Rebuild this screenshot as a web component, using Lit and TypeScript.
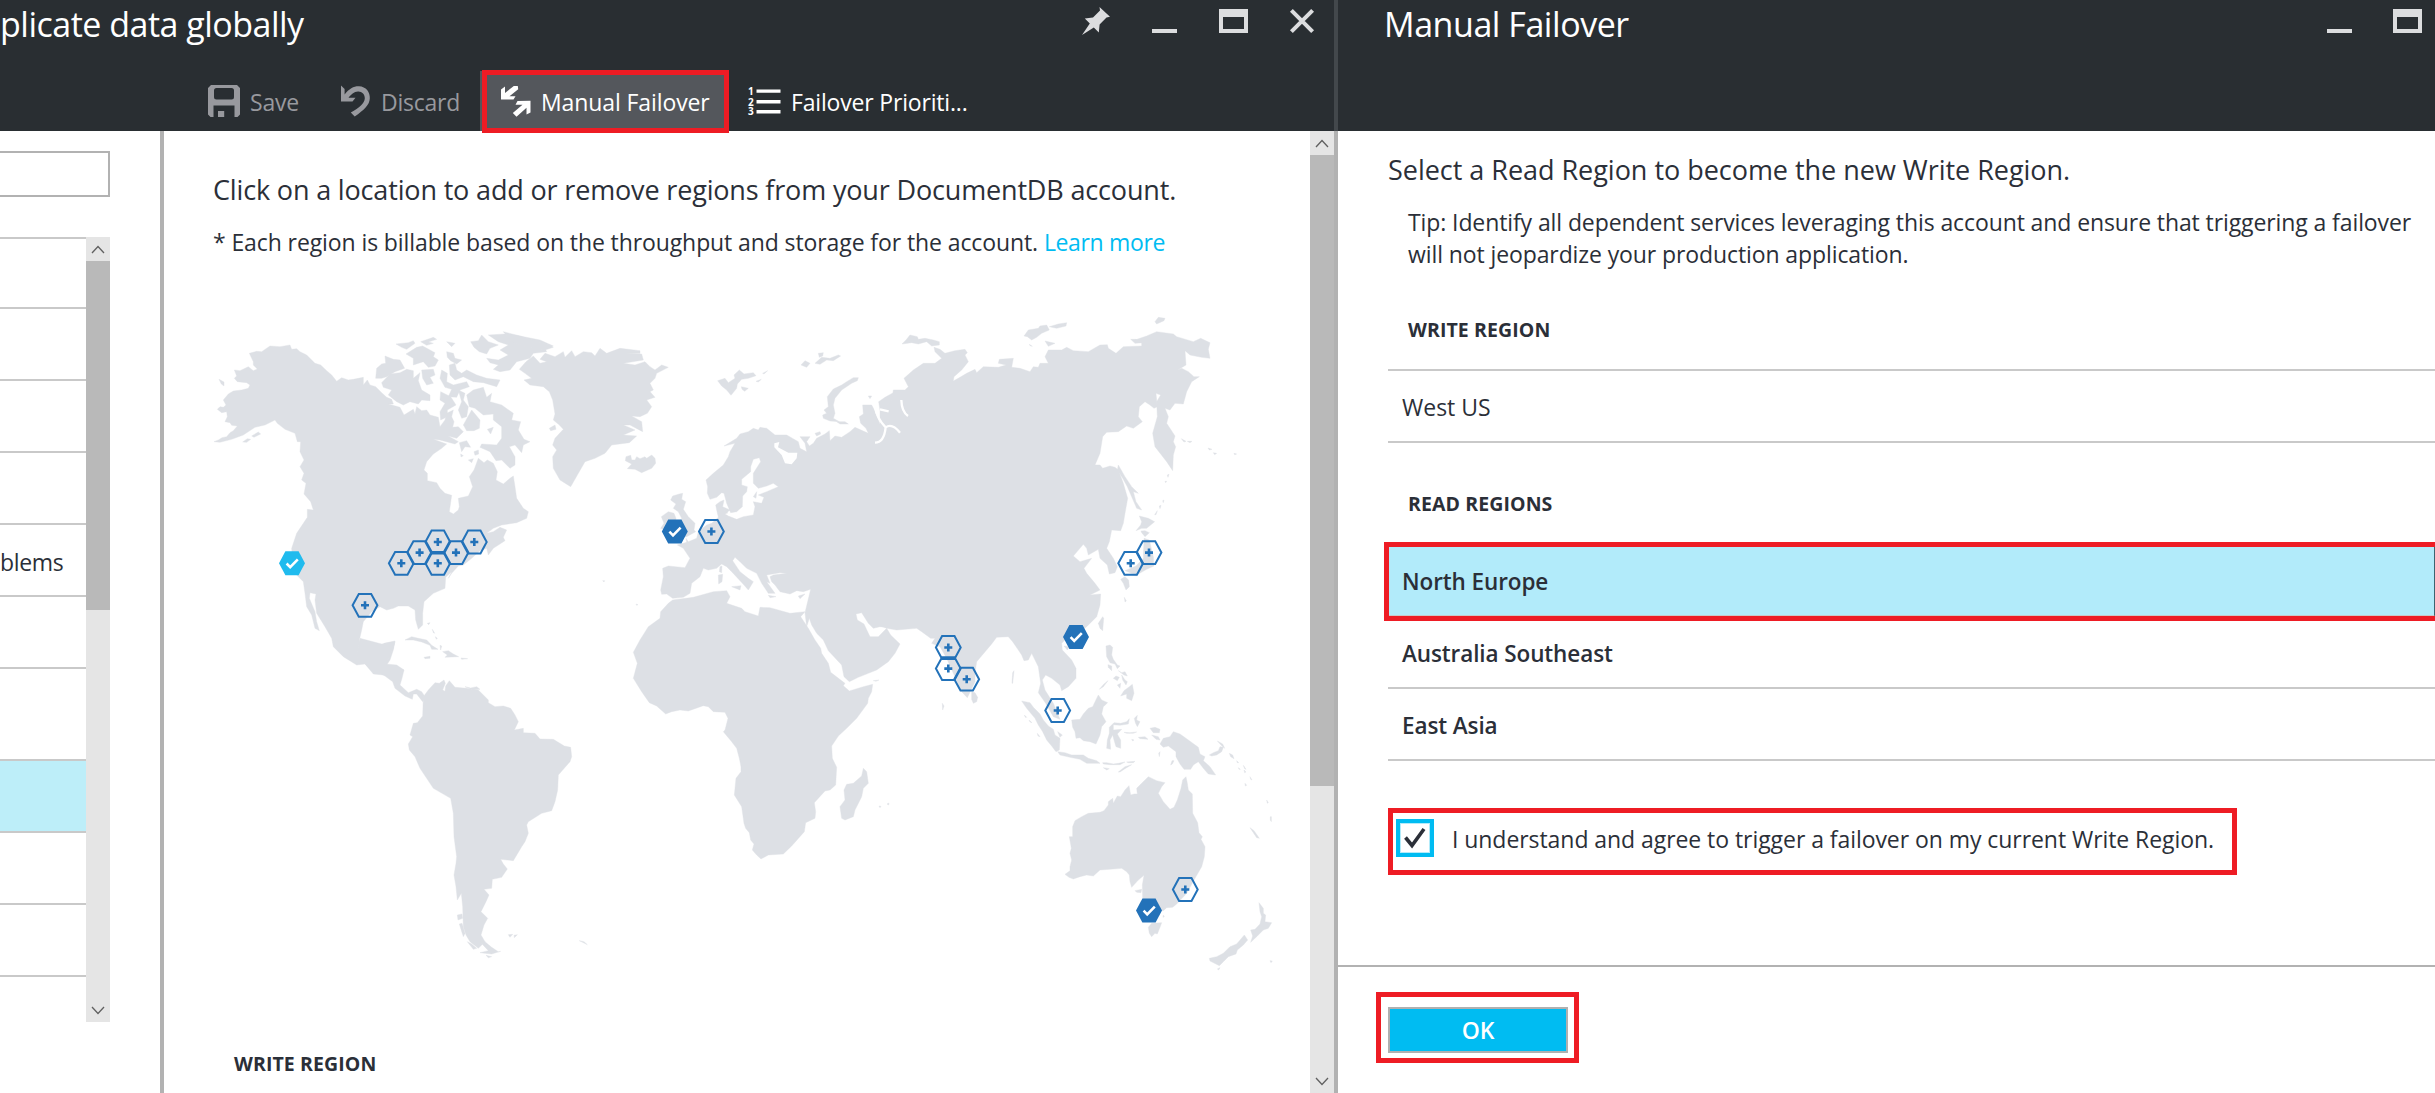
import { LitElement, html, css, svg, nothing } from "lit";
import { customElement } from "lit/decorators.js";
import { classMap } from "lit/directives/class-map.js";

type Marker = { x: number; y: number; kind: "plus" | "check" | "write" };

const MARKERS: Marker[] = [
  { x: 292, y: 563.3, kind: "write" },
  { x: 401.3, y: 563.3, kind: "plus" },
  { x: 419.6, y: 552.6, kind: "plus" },
  { x: 437.8, y: 542, kind: "plus" },
  { x: 437.8, y: 563.3, kind: "plus" },
  { x: 456, y: 552.6, kind: "plus" },
  { x: 474.3, y: 542, kind: "plus" },
  { x: 365, y: 605.3, kind: "plus" },
  { x: 674.8, y: 531.5, kind: "check" },
  { x: 711.4, y: 531.5, kind: "plus" },
  { x: 1130.7, y: 563.3, kind: "plus" },
  { x: 1149, y: 552.6, kind: "plus" },
  { x: 1076, y: 637, kind: "check" },
  { x: 948.3, y: 647.5, kind: "plus" },
  { x: 948.3, y: 668.6, kind: "plus" },
  { x: 966.7, y: 679.2, kind: "plus" },
  { x: 1057.7, y: 710.5, kind: "plus" },
  { x: 1185.3, y: 889.5, kind: "plus" },
  { x: 1149, y: 910.5, kind: "check" },
];

/* Land outlines, grouped by map sheet. Each sheet is drawn at three units per map pixel. */
const NORTH_AMERICA = [
  "42,395 55,390 66,383 80,380 90,368 100,362 112,348 95,346 90,338 75,335 82,320 80,305 65,308 52,298 60,290 70,292 78,285 70,270 85,252 100,243 125,240 145,235 150,225 140,218 112,215 103,205 110,198 103,180 120,182 145,170 160,182 172,177 160,165 160,155 148,130 170,124 185,125 210,108 240,110 270,105 275,118 290,116 300,125 320,135 345,160 362,165 380,182 395,195 410,214 425,203 445,210 460,208 490,202 490,225 502,210 510,225 527,230 545,248 560,262 575,268 580,282 565,282 600,292 612,315 640,298 645,312 650,290 665,302 680,300 690,315 715,322 720,350 735,330 740,310 760,300 755,320 762,335 758,352 775,350 790,365 770,385 745,378 775,395 765,402 720,390 700,388 740,402 725,415 700,432 680,455 672,480 682,490 682,512 710,518 720,535 735,550 755,556 748,605 760,612 775,600 778,590 775,565 805,558 818,530 808,500 822,480 835,445 852,458 862,450 880,460 892,485 888,510 910,522 930,505 940,498 945,530 950,565 970,595 985,605 980,625 950,638 905,645 880,655 860,670 880,665 900,652 920,660 910,682 915,692 880,715 865,735 860,715 840,722 815,745 790,765 775,768 755,790 745,805 755,785 737,802 735,835 700,850 672,875 668,910 668,945 655,958 647,930 645,900 625,888 595,888 580,895 560,900 540,890 515,905 490,935 485,960 478,990 490,1020 515,1035 540,1025 552,1000 585,993 580,1020 570,1050 560,1065 590,1070 612,1080 600,1100 520,1092 495,1062 470,1065 430,1040 400,1010 395,985 375,950 350,910 345,870 348,852 330,848 328,865 345,905 350,935 358,962 345,955 335,915 320,890 315,850 310,815 290,795 278,760 275,715 290,670 310,640 322,622 322,598 340,600 332,575 312,552 318,520 305,510 312,490 300,470 312,450 300,425 302,395 292,395 285,370 255,358 232,340 225,330 195,345 165,352 130,375 95,388 60,397",
  "57,208 72,216 72,228 64,222",
  "128,396 142,386 152,388 140,397",
  "155,378 175,366 182,372 162,382",
  "527,205 530,175 545,162 557,160 555,138 580,148 600,150 614,175 585,185 560,200 545,205",
  "545,218 570,192 600,188 620,178 640,182 640,205 660,188 655,212 665,240 690,255 690,272 665,270 655,282 630,275 610,285 590,275 565,255 575,240 550,232",
  "588,102 625,98 640,92 645,100 620,118 605,112",
  "618,132 650,112 668,108 690,120 705,128 700,140 715,150 705,168 685,172 670,155 640,165 640,145",
  "662,95 700,82 710,88 685,96 700,100 680,106",
  "740,125 760,130 765,145 785,150 770,162 752,152 742,142",
  "740,95 765,100 755,110",
  "748,165 765,160 770,180 785,190 800,180 830,195 860,205 900,210 890,230 850,218 820,215 790,200 765,210 750,195",
  "665,180 700,178 705,195 690,202 700,220 680,225 668,205",
  "725,180 742,190 740,215 760,225 800,215 808,230 780,240 770,262 745,260 755,238 735,232 720,205",
  "812,95 835,92 845,75 865,95 895,105 870,115 860,132 838,125 822,112",
  "865,75 915,72 960,78 1020,90 1060,108 1035,115 1040,125 1000,130 990,145 950,155 930,180 900,185 880,178 895,165 870,158 860,145 895,150 925,135 900,120 925,105 895,95",
  "722,245 752,260 768,285 742,300 742,320 722,330 720,305 735,280 720,270",
  "775,240 795,250 790,270 805,290 800,320 785,325 775,300 785,275",
  "800,255 820,240 850,232 860,262 875,250 870,275 905,285 940,310 935,330 962,335 955,360 972,388 990,395 970,405 965,428 945,405 928,410 945,440 945,465 930,475 905,450 888,452 870,425 840,412 845,402 890,405 905,385 905,350 880,330 880,312 850,315 825,295 808,290",
  "815,300 840,330 838,355 822,362 800,362 790,345",
  "862,358 880,352 872,372",
  "778,398 800,392 812,412 795,410 785,425",
  "822,425 835,420 836,432 825,436",
  "805,450 820,446 815,458",
  "782,432 790,437 783,441",
  "615,990 635,980 655,985 680,990 695,1006 714,1018 695,1018 690,1006 665,996 640,990",
  "728,1025 745,1022 760,1032 776,1040 735,1042 742,1035",
  "672,1042 690,1039 690,1045 675,1046",
  "783,1044 803,1046 785,1048",
  "682,940 690,938 686,944",
  "697,958 704,970 700,968",
  "706,980 712,985 709,988",
];

const EUROPE = [
  "-110,65 -60,78 -10,95 30,105 40,112 15,120 -30,112 -80,100",
  "-62,178 -42,155 -20,138 0,160 20,155 0,148 15,130 45,140 70,125 75,142 95,122 105,140 130,125 155,128 165,138 180,115 200,130 240,115 300,122 300,130 260,130 305,132 310,150 250,160 285,165 315,155 330,170 345,180 365,165 385,172 350,190 345,205 330,220 340,240 330,245 345,262 320,270 335,290 322,310 300,320 275,318 305,335 308,365 270,345 250,345 285,360 250,375 290,378 268,398 215,405 195,430 165,445 135,455 115,490 92,530 60,510 40,475 38,440 50,420 38,405 45,385 70,358 58,345 40,330 45,312 38,270 28,245 10,230 -30,225 -48,210 -25,205 -45,190",
  "28,355 45,345 48,358 32,362",
  "258,440 272,436 275,450 285,450 290,440 300,446 315,440 320,445 335,435 345,445 347,460 335,475 305,488 285,478 262,476 275,462 256,452",
  "533,212 555,205 565,218 585,205 582,195 598,180 612,192 640,188 648,197 625,205 605,208 592,222 590,235 573,256 560,240 545,228",
  "604,230 625,235 614,244 606,238",
  "648,214 664,208 655,216",
  "668,190 683,182 672,192",
  "955,203 952,212 935,220 905,240 885,265 880,285 885,310 880,325 898,335 870,333 850,325 848,315 860,310 852,300 865,290 862,260 880,237 905,225 920,215 940,203",
  "783,165 795,152 810,160 800,172",
  "825,160 845,142 870,145 895,135 902,138 880,152 860,150 840,163",
  "835,130 850,128 848,138 838,142",
  "392,570 398,558 418,552 428,550 425,568 437,575 430,598 445,620 465,640 462,660 467,665 440,680 412,680 425,660 420,640 425,625 415,605 400,595 408,582",
  "364,620 385,605 402,610 408,625 405,650 390,665 362,655 372,640",
  "368,775 385,768 435,773 450,745 430,715 412,705 440,697 438,685 445,695 470,685 475,665 500,645 515,640 535,622 530,600 527,585 540,575 552,570 548,590 570,600 555,612 565,618 590,628 610,620 640,615 645,590 640,575 665,580 672,562 655,555 680,545 715,530 700,520 680,528 655,535 640,520 640,490 662,455 658,443 640,448 632,470 632,485 605,508 605,525 622,530 620,545 608,558 607,590 590,605 572,608 560,580 552,550 545,548 530,562 510,568 502,550 503,530 498,510 520,490 550,465 565,440 570,425 585,400 552,408 590,385 600,372 625,365 640,355 655,360 660,352 680,355 705,375 740,375 775,395 780,415 800,425 795,400 780,380 810,380 800,395 808,408 820,400 830,385 855,372 868,362 870,392 885,378 905,382 930,365 945,352 985,370 978,355 962,340 958,320 970,312 968,285 995,285 1003,300 1015,330 1025,355 1045,375 1045,952 1020,950 1000,955 985,940 965,908 948,912 952,930 972,942 990,980 1015,980 1040,955 1052,975 1080,1002 1065,1030 1045,1055 1010,1080 985,1090 955,1102 928,1115 912,1100 905,1065 865,1022 850,990 830,970 815,945 808,925 800,950 795,908 812,838 790,845 770,842 750,852 720,845 705,825 695,815 690,800 700,795 740,790 720,788 680,795 690,820 680,815 705,850 685,850 665,820 650,790 620,775 600,755 585,742 578,752 600,785 625,805 640,815 625,840 612,825 575,785 560,770 545,762 530,775 505,780 490,775 480,800 455,820 450,850 430,862 398,865 380,852 365,853 362,840 370,800",
  "575,830 603,827 600,840",
  "535,795 548,793 546,815 536,822",
  "540,770 546,768 545,788 538,785",
  "775,858 795,852 780,866",
  "685,856 708,860 690,863",
  "552,600 562,598 562,610 555,610",
  "650,545 640,560 648,565",
  "825,370 840,365 842,372 830,378",
  "890,335 915,335 925,342 900,342",
  "985,258 995,258 990,266",
  "1016,275 1035,262 1060,248 1095,250 1110,270 1090,300 1108,320 1060,318 1045,300 1020,300",
  "188,812 194,812 192,816",
  "288,882 294,884 290,886",
];

const ASIA = [
  "0,300 15,288 35,275 40,240 75,240 85,230 72,205 100,180 130,160 165,160 185,145 165,125 162,112 180,118 195,130 225,122 255,118 262,128 255,135 265,155 245,180 222,200 220,213 240,202 260,190 285,178 290,188 310,170 355,172 378,165 355,160 358,148 400,145 395,172 420,175 450,185 460,170 475,172 480,160 505,160 495,140 505,120 545,120 560,112 580,122 625,125 660,105 682,104 685,115 708,130 730,110 785,108 785,98 765,90 800,78 830,65 880,72 890,80 940,95 962,85 990,98 985,118 990,145 965,142 945,138 930,135 915,122 918,165 893,180 905,175 925,185 942,200 958,200 935,215 920,245 910,282 885,280 870,300 855,295 865,320 860,340 885,378 880,395 887,410 880,435 878,482 860,455 825,410 818,370 832,320 830,275 842,255 828,250 832,290 822,295 810,285 795,275 778,290 775,320 787,335 760,355 740,348 715,365 680,367 668,380 660,430 645,465 660,465 668,475 690,468 705,472 715,480 730,520 743,565 735,610 730,640 722,662 695,660 688,695 680,715 700,745 712,770 705,788 688,792 682,765 660,745 655,718 625,735 620,715 610,703 580,738 600,755 635,745 612,775 620,790 645,820 660,840 630,855 662,852 660,885 650,920 620,950 600,965 570,975 545,1000 547,1020 575,1050 588,1075 588,1105 565,1130 545,1142 540,1125 515,1105 497,1095 487,1110 495,1140 520,1180 540,1228 520,1220 497,1180 475,1148 482,1120 475,1070 455,1030 445,1050 432,1052 425,1035 398,995 385,980 350,982 335,1002 290,1055 285,1090 285,1115 262,1163 245,1145 220,1090 200,1045 180,1010 155,1000 165,985 152,985 125,965 110,955 50,960 20,955 0,948",
  "715,465 735,500 755,530 775,550 760,545 768,575 785,600 770,595 755,560 742,530 728,505 712,480",
  "778,618 805,625 824,635 800,655 785,655 768,662 782,645 785,635",
  "783,663 795,662 808,668 795,680 785,668",
  "792,685 808,690 820,740 822,768 800,778 775,792 755,790 735,782 768,768 790,745",
  "755,795 775,788 770,798",
  "722,808 735,800 746,810 748,830 738,840 730,820",
  "655,940 668,920 671,925 668,962 660,955",
  "552,1008 568,1010 562,1020",
  "66,102 78,90 90,75 112,80 115,88 135,85 160,90 178,95 178,105 155,108 140,95 115,102 95,98",
  "432,78 445,60 475,55 480,48 500,45 508,60 485,70 470,82 455,90 442,80",
  "508,50 535,42 560,38 558,48 530,55",
  "495,93 525,100 505,109",
  "448,103 457,109 450,107",
  "825,35 835,22 855,25 852,32 830,42",
  "752,88 768,88 790,98 765,100",
  "904,386 918,394 912,396",
  "922,394 936,394 930,398",
  "984,414 996,418 988,420",
  "1000,428 1010,430 1004,434",
  "1062,430 1070,432 1064,434",
  "862,495 867,493 864,502",
  "855,514 860,514 857,518",
  "848,572 852,570 850,578",
  "838,588 843,586 840,596",
  "824,614 832,602 828,614",
  "733,862 739,873 735,876",
];

const SOUTH = [
  "-60,-5 5,12 45,5 40,25 18,72 50,75 72,90 66,115 60,135 85,158 110,148 125,155 135,170 128,185 110,162 100,162 97,178 75,168 45,145 38,125 15,108 0,100 -30,85 -70,50",
  "130,170 145,150 165,128 178,130 192,120 196,130 188,150 195,154 197,138 208,122 225,142 260,145 275,148 295,150 325,180 325,188 345,200 370,198 392,205 405,225 415,245 403,270 430,265 430,278 465,280 480,297 520,298 553,318 572,322 575,350 570,365 535,405 533,450 525,485 515,512 485,520 445,545 440,555 445,580 435,605 425,620 400,662 362,658 370,672 382,687 365,712 337,718 335,745 312,748 327,765 318,785 303,815 323,835 312,855 303,885 315,905 295,925 270,905 258,885 250,860 248,800 244,760 232,780 228,740 222,705 228,670 230,650 222,590 220,520 212,475 160,445 140,415 120,385 105,350 88,330 85,312 98,290 90,285 100,250 112,248 128,228",
  "232,825 246,822 248,835 234,840",
  "238,852 246,850 255,880 250,890",
  "262,905 275,912 290,925 280,928",
  "300,905 315,905 335,922 355,935 362,934 335,942 300,938 325,932",
  "318,946 335,950 325,953",
  "385,884 398,883 390,892",
  "402,886 412,884 403,893",
  "598,902 612,905 622,914 612,909",
  "182,30 185,18 180,16",
  "255,140 272,144 290,140 300,148 278,150",
  "878,-120 865,-110 842,-85 840,-65 805,-40 780,0 760,37 772,70 760,115 785,155 808,188 830,198 857,222 875,215 900,210 925,213 970,197 985,200 1000,215 1035,217 1044,235 1035,270 1030,275 1055,305 1070,325 1078,355 1083,380 1083,395 1068,415 1063,465 1085,500 1092,550 1097,565 1108,578 1112,600 1122,612 1117,630 1130,645 1143,657 1165,645 1210,642 1235,618 1273,575 1277,548 1305,535 1307,515 1303,488 1335,453 1350,450 1367,435 1370,382 1357,355 1355,318 1375,288 1400,265 1430,235 1463,190 1465,175 1475,155 1478,133 1450,140 1408,153 1390,137 1395,130 1352,97 1345,70 1325,40 1322,25 1305,0 1285,-35 1262,-70 1275,-85 1230,-80 1170,-97 1140,-98 1135,-72 1095,-85 1085,-95 1040,-110 1050,-130 1040,-148 1000,-145 940,-128",
  "1450,385 1460,395 1465,430 1450,445 1445,470 1425,510 1420,530 1395,540 1385,535 1380,500 1395,480 1392,450 1400,433 1420,430 1445,408",
  "1480,122 1497,120 1488,124",
  "1497,498 1503,499 1500,503",
  "1521,492 1527,489 1526,495",
];

const OCEANIA = [
  "275,155 285,158 293,172 290,185 280,190 275,178",
  "425,183 450,188 460,202 480,222 490,240 505,258 520,268 525,285 540,295 538,330 528,335 515,318 500,300 488,275 475,255 465,235 440,205",
  "433,225 440,232 436,232",
  "447,240 456,248 450,246",
  "472,280 480,290 474,288",
  "533,275 547,285 540,292",
  "533,335 555,338 575,345 592,345 610,345 625,355 650,362 660,370 620,370 600,358 570,352 540,345",
  "668,368 680,368 700,372 715,370 735,366 720,374 690,374 670,372",
  "715,396 735,380 755,374 735,386 720,396",
  "670,383 688,386 680,390",
  "740,366 765,364 760,368 745,368",
  "575,240 600,238 610,222 625,205 638,200 655,165 665,180 683,188 670,200 665,222 678,245 665,260 660,285 648,312 630,305 610,302 600,293 588,295 585,275 578,262",
  "688,262 702,248 722,250 740,245 748,236 745,252 720,256 700,254 700,270 725,268 712,282 722,300 722,325 708,320 702,300 698,285 690,300 692,328 680,325 682,300 688,280",
  "763,235 772,226 770,240 780,245 772,260 766,248",
  "755,298 762,300 758,303",
  "775,292 795,290 804,298 780,296",
  "732,277 750,278 770,276 760,280 740,280",
  "678,18 690,15 698,22 695,45 700,58 712,75 720,78 712,86 705,72 690,68 680,50",
  "684,74 695,78 695,92 685,82",
  "658,148 672,132 684,122 670,140",
  "708,108 718,112 712,122 700,115",
  "715,92 725,98 735,95 742,108 732,105",
  "725,105 735,120 742,125 738,135 728,120",
  "712,135 722,130 720,145",
  "722,168 732,152 748,140 757,133 762,160 755,182 740,175 740,162",
  "810,265 825,262 840,268 838,278 820,278",
  "815,285 835,290 840,300 828,298",
  "840,312 850,295 870,290 880,275 900,282 925,300 955,322 960,342 975,350 970,362 990,380 1007,405 985,402 970,385 955,365 940,375 932,388 912,388 900,372 888,350 888,335 865,318 850,322",
  "836,340 840,335 838,350",
  "872,375 876,362 882,362 877,372",
  "988,345 1000,338 1015,332 1020,320 1030,322 1025,335 1010,345 995,348",
  "1012,303 1028,312 1034,325 1026,318",
  "1048,340 1058,345 1062,356 1052,350",
  "1070,362 1076,368 1072,368",
  "1075,383 1081,388 1077,388",
  "1090,376 1098,388 1094,386",
  "1092,390 1098,396 1094,398",
  "1110,410 1116,420 1112,418",
  "1095,430 1100,436 1096,438",
  "1160,480 1165,488 1162,490",
  "1171,530 1174,530 1174,545 1171,540",
  "1110,563 1122,572 1138,595 1130,593",
  "555,703 570,692 570,680 575,660 570,640 574,625 568,590 578,590 578,560 585,542 605,530 625,520 660,517 672,512 685,495 685,485 698,475 700,490 712,468 722,470 735,450 747,437 752,465 762,462 772,462 770,445 785,430 805,410 830,422 855,428 845,440 835,460 850,485 870,508 882,502 892,480 903,445 908,420 918,410 922,430 925,450 937,462 938,520 953,548 957,578 967,590 963,598 975,620 973,650 965,680 945,715 920,760 890,792 878,802 860,803 850,812 810,808 788,775 787,735 792,706 775,720 755,742 750,725 748,705 740,695 725,685 690,688 660,690 640,708 620,705 600,710 580,717 567,712",
  "765,752 785,748 783,758 770,757",
  "805,862 815,850 845,848 840,862 832,882 825,880 815,890 808,880",
  "850,825 853,830 849,832",
  "1137,788 1150,805 1150,820 1157,825 1155,845 1175,848 1165,865 1150,870 1130,890 1112,907 1118,888 1112,870 1125,868 1140,852 1145,830 1140,815",
  "1093,885 1103,900 1090,915 1072,930 1068,942 1045,950 1030,965 1018,977 990,963 988,955 1010,950 1030,940 1050,920 1070,912",
  "1012,987 1020,983 1016,990",
  "1170,962 1177,963 1173,968",
  "187,190 192,198 188,210",
  "396,130 398,98 402,92 398,130",
];

const SHEETS: [number, number, string[]][] = [
  [200, 310, NORTH_AMERICA],
  [540, 310, EUROPE],
  [880, 310, ASIA],
  [380, 640, SOUTH],
  [880, 640, OCEANIA],
];

const pinIcon = html`<svg class="ico" width="28" height="28" viewBox="0 0 28 28"><path fill="#dcdddf" d="M17.5 0 28 9.8 24.500 10.400 17.600 17.500 16.800 25.500 11.800 20.500 0 28 7.800 16.500 2.800 11.500 11 10.600 18 3.500Z"/></svg>`;
const minIcon = html`<svg class="ico" width="25" height="28" viewBox="0 0 25 28"><path fill="#dcdddf" d="M0 22h25v4H0z"/></svg>`;
const maxIcon = html`<svg class="ico" width="29" height="28" viewBox="0 0 29 28"><path fill="#dcdddf" fill-rule="evenodd" d="M0 2h29v24H0zM4 10v12h21V10z"/></svg>`;
const closeIcon = html`<svg class="ico" width="24" height="28" viewBox="0 0 24 28"><path stroke="#dcdddf" stroke-width="4" fill="none" d="M1.400 3.400 22.600 24.600M22.600 3.400 1.400 24.600"/></svg>`;

const saveIcon = html`<svg class="ico" width="32" height="32" viewBox="0 0 32 32"><path fill="#98999e" fill-rule="evenodd" d="M3 0H29L32 3V29.500L29.500 32H26.500V20.500H5.500V32H2.500L0 29.500V3ZM8.500 3Q6 3 6 5.500V12Q6 14.500 8.500 14.500H23.500Q26 14.500 26 12V5.500Q26 3 23.500 3Z"/><path fill="#98999e" d="M10 26h6.200v6H10z"/></svg>`;
const discardIcon = html`<svg class="ico" width="32" height="32" viewBox="0 0 32 32"><path fill="#98999e" d="M0 0.500 3.600 4V9.500C8 3.500 13 1 18 1.200C25 1.500 29.300 7 28.800 13.500C28.500 20 23 25 13.700 31.500L9.800 27.500C18.500 22.500 23.500 18.500 23.800 13.500C24 9.500 21 6.300 17 6.500C13 6.700 10 9.500 7.500 12.800H14.500L11.500 16.500H0Z"/></svg>`;
const failoverIcon = html`<svg class="ico" width="30" height="32" viewBox="0 0 30 32"><path fill="#fff" d="M12.800 1 16.800 1 17.200 4.200 8.500 11.200H14.500L12.500 14.500H0V4.500L4 1.500V8Z"/><path fill="#fff" d="M29.500 15.800V27.500L25.500 29.500V22.800L15.500 31.800 11.800 28 21.500 19.800H14.500L16.500 16Z"/></svg>`;
const priorityIcon = html`<svg class="ico" width="33" height="28" viewBox="0 0 33 28"><g fill="#fff"><path d="M8.500 3.400h24v3.400h-24zM8.500 14h24v3.400h-24zM8.500 24h24v3.400h-24z" transform="translate(0 -1)"/><text x="0" y="8.300" class="num">1</text><text x="0" y="18.600" class="num">2</text><text x="0" y="28" class="num">3</text></g></svg>`;

@customElement("scroll-track")
export class ScrollTrack extends LitElement {
  static properties = { thumb: { type: Number } };
  declare thumb: number;
  static styles = css`
    :host { display: flex; flex-direction: column; width: 24px; background: #e5e5e5; }
    .btn { height: 24px; display: flex; align-items: center; justify-content: center; flex: none; }
    .thumb { background: #b9b9b9; flex: none; }
    .gap { flex: 1; }
    svg { display: block; }
  `;
  render() {
    return html`
      <div class="btn"><svg width="14" height="9" viewBox="0 0 14 9"><path d="M1 8 7 1.500 13 8" fill="none" stroke="#606060" stroke-width="1.300" /></svg></div>
      <div class="thumb" style="height:${this.thumb}px"></div>
      <div class="gap"></div>
      <div class="btn"><svg width="14" height="9" viewBox="0 0 14 9"><path d="M1 1 7 7.500 13 1" fill="none" stroke="#606060" stroke-width="1.300" /></svg></div>
    `;
  }
}

@customElement("region-map")
export class RegionMap extends LitElement {
  static styles = css`
    :host { display: block; }
    svg { display: block; }
    .land { fill: #dde0e5; stroke: #dde0e5; stroke-width: 1.200; stroke-linejoin: round; }
    .inlet { fill: #fff; }
    .strait { fill: none; stroke: #fff; stroke-width: 7; }
    .ring { fill: none; stroke: #2372b9; stroke-width: 2; }
    .plus { stroke: #2372b9; stroke-width: 2.600; }
    .solid { fill: #2372b9; }
    .write .solid { fill: #20bbee; }
    .tick { fill: none; stroke: #fff; stroke-width: 2.600; }
  `;
  marker(m: Marker) {
    const t = `translate(${m.x} ${m.y})`;
    return m.kind === "plus"
      ? svg`<g transform=${t}><path class="ring" d="M-12.400 0-6.200-11.400H6.200L12.400 0 6.200 11.400H-6.200Z"/><path class="plus" d="M-4 0H4M0-4V4"/></g>`
      : svg`<g transform=${t} class=${m.kind}><path class="solid" d="M-13 0-6.600-12H6.600L13 0 6.600 12H-6.600Z"/><path class="tick" d="M-5.400 0.200-1.800 3.800 5.800-3.900"/></g>`;
  }
  render() {
    return html`<svg width="1090" height="700" viewBox="205 300 1090 700">
      ${SHEETS.map(([x, y, shapes]) => svg`<g class="land" transform="translate(${x} ${y}) scale(0.33333)">${shapes.map((p) => svg`<polygon points=${p}/>`)}</g>`)}
      <g transform="translate(540 310) scale(0.33333)">
        <path class="inlet" d="M703 400 718 396 714 412 745 428 772 428 770 445 755 463 735 460 725 435 703 412Z" />
        <path class="strait" d="M1005 290Q1010 325 1037 352Q1032 398 1005 398M1037 352Q1056 338 1080 368" />
        <path class="strait" d="M1020 298 1046 304M1084 270Q1085 305 1104 318" />
      </g>
      ${MARKERS.map((m) => this.marker(m))}
    </svg>`;
  }
}

const LIST_ROWS = [
  { h: 70 }, { h: 72 }, { h: 72 }, { h: 72 }, { h: 72, text: "blems" }, { h: 72 }, { h: 92 },
  { h: 72, selected: true }, { h: 72 }, { h: 72 },
] as { h: number; text?: string; selected?: boolean }[];

const READ_REGIONS = ["North Europe", "Australia Southeast", "East Asia"];

@customElement("app-root")
export class AppRoot extends LitElement {
  static styles = css`
    :host {
      display: block; width: 2435px; height: 1093px; overflow: hidden; background: #fff;
      font: 400 23px/32px "Open Sans", "Noto Sans", sans-serif; color: #2b2f38; letter-spacing: -0.1px;
    }
    *, *::after { box-sizing: border-box; }
    .ico { display: block; flex: none; overflow: visible; }
    .num { font: 700 10px "Open Sans", sans-serif; letter-spacing: 0; }
    .page { display: flex; height: 1093px; }
    .blade { display: flex; flex-direction: column; height: 1093px; }
    .first { width: 1334px; }
    .second { width: 1097px; }
    .seam { width: 4px; background: linear-gradient(#43484c 131px, #b2b2b2 131px); }
    .header { height: 131px; background: #292e32; color: #fff; flex: none; }
    .titlebar { height: 71px; display: flex; justify-content: space-between; align-items: flex-start; }
    .title { font-size: 34px; line-height: 46px; letter-spacing: -0.5px; white-space: nowrap; padding-top: 1px; }
    .second .title { padding-left: 46px; letter-spacing: -0.45px; }
    .win { display: flex; padding-top: 7px; }
    .first .win { gap: 42px; padding-right: 20px; }
    .second .win { gap: 41px; padding-right: 13px; }
    .toolbar { display: flex; height: 60px; padding-left: 208px; }
    .tool { display: flex; align-items: center; position: relative; white-space: nowrap; }
    .tool span { padding-top: 2px; }
    .off { color: #98999e; }
    .save { width: 133px; gap: 10px; letter-spacing: -0.2px; }
    .discard { width: 139px; gap: 8px; letter-spacing: -0.25px; }
    .manual { width: 249px; gap: 10px; padding-left: 21px; background: #54575c; letter-spacing: -0.1px; }
    .manual::after { content: ""; position: absolute; left: 2px; top: -1px; width: 247px; height: 63px; border: 5px solid #ee1c24; }
    .prior { padding-left: 19px; gap: 10px; letter-spacing: -0.18px; }
    .body { display: flex; flex: 1; min-height: 0; }
    .nav { width: 164px; border-right: 4px solid #b2b2b2; padding-top: 20px; }
    .search { width: 110px; height: 46px; border: 2px solid #b2b2b2; border-left: 0; }
    .listwrap { display: flex; margin-top: 40px; height: 785px; width: 110px; }
    .list { width: 86px; border-top: 2px solid #c9c9c9; }
    .item { border-bottom: 2px solid #c9c9c9; display: flex; align-items: center; letter-spacing: -0.35px; padding-top: 4px; }
    .item.sel { background: #bdeef9; }
    .main { width: 1146px; padding: 39px 0 0 49px; }
    .lead { font-size: 27px; line-height: 40px; letter-spacing: -0.16px; white-space: nowrap; }
    .note { margin-top: 16px; white-space: nowrap; }
    .link { color: #00bcf2; letter-spacing: -0.35px; }
    .map { margin: 42px 0 0 -8px; }
    .sec { font-size: 19.500px; line-height: 30px; font-weight: 700; padding-left: 20px; letter-spacing: 0.1px; }
    .main .sec { margin-top: 49px; padding-left: 21px; }
    .pane { flex: 1; padding: 19px 0 0 50px; }
    .second .lead { letter-spacing: -0.03px; }
    .tip { margin-top: 16px; padding-left: 20px; white-space: nowrap; }
    .pane .w { margin: 45px 0 24px; }
    .pane .r { margin: 46px 0 26px; }
    .row { height: 72px; border-bottom: 2px solid #c9c9c9; padding: 4px 0 0 14px; display: flex; align-items: center; position: relative; }
    .row.top { height: 74px; border-top: 2px solid #c9c9c9; letter-spacing: 0; padding-top: 2px; }
    .row.read { font-weight: 600; font-size: 22.500px; letter-spacing: -0.100px; }
    .row.picked { background: #b2ebfa; border-right: 1px solid #3b6471; }
    .row.picked::after { content: ""; position: absolute; left: -4px; top: -3px; width: 1060px; height: 79px; border: 5px solid #ee1c24; }
    .agree { margin-top: 47px; width: 849px; height: 67px; border: 5px solid #ee1c24; padding: 6px 0 0 3px; display: flex; align-items: flex-start; gap: 18px; white-space: nowrap; }
    .agree span { line-height: 40px; letter-spacing: -0.060px; }
    .box { width: 38px; height: 38px; border: 4px solid #00bcf2; box-shadow: inset 0 0 0 1px #b2ebfa; display: flex; align-items: center; justify-content: center; flex: none; }
    .footer { height: 128px; border-top: 2px solid #b2b2b2; padding: 40px 0 0 50px; }
    .ok { width: 180px; height: 46px; background: #00bcf2; border: 2px solid #b0b0b0; color: #fff; font-weight: 600; display: flex; align-items: center; justify-content: center; position: relative; }
    .ok::after { content: ""; position: absolute; left: -14px; top: -17px; width: 203px; height: 71px; border: 5px solid #ee1c24; }
  `;

  render() {
    return html`
      <div class="page">
        <section class="blade first">
          <div class="header">
            <div class="titlebar">
              <div class="title">plicate data globally</div>
              <div class="win">${pinIcon}${minIcon}${maxIcon}${closeIcon}</div>
            </div>
            <div class="toolbar">
              <div class="tool off save">${saveIcon}<span>Save</span></div>
              <div class="tool off discard">${discardIcon}<span>Discard</span></div>
              <div class="tool manual">${failoverIcon}<span>Manual Failover</span></div>
              <div class="tool prior">${priorityIcon}<span>Failover Prioriti...</span></div>
            </div>
          </div>
          <div class="body">
            <nav class="nav">
              <div class="search"></div>
              <div class="listwrap">
                <div class="list">
                  ${LIST_ROWS.map((r) => html`<div class=${classMap({ item: true, sel: !!r.selected })} style="height:${r.h}px">${r.text ?? nothing}</div>`)}
                </div>
                <scroll-track .thumb=${349}></scroll-track>
              </div>
            </nav>
            <div class="main">
              <div class="lead">Click on a location to add or remove regions from your DocumentDB account.</div>
              <div class="note">* Each region is billable based on the throughput and storage for the account. <span class="link">Learn more</span></div>
              <region-map class="map"></region-map>
              <div class="sec">WRITE REGION</div>
            </div>
            <scroll-track .thumb=${631}></scroll-track>
          </div>
        </section>
        <div class="seam"></div>
        <section class="blade second">
          <div class="header">
            <div class="titlebar">
              <div class="title">Manual Failover</div>
              <div class="win">${minIcon}${maxIcon}</div>
            </div>
          </div>
          <div class="pane">
            <div class="lead">Select a Read Region to become the new Write Region.</div>
            <div class="tip">Tip: Identify all dependent services leveraging this account and ensure that triggering a failover<br />will not jeopardize your production application.</div>
            <div class="sec w">WRITE REGION</div>
            <div class="row top">West US</div>
            <div class="sec r">READ REGIONS</div>
            ${READ_REGIONS.map((name, i) => html`<div class=${classMap({ row: true, read: true, picked: i === 0 })}>${name}</div>`)}
            <div class="agree">
              <div class="box"><svg width="24" height="24" viewBox="0 0 24 24"><path d="M2.500 11.500 9 19.500 21 3" fill="none" stroke="#2b2f38" stroke-width="3.600" /></svg></div>
              <span>I understand and agree to trigger a failover on my current Write Region.</span>
            </div>
          </div>
          <div class="footer"><div class="ok">OK</div></div>
        </section>
      </div>
    `;
  }
}
